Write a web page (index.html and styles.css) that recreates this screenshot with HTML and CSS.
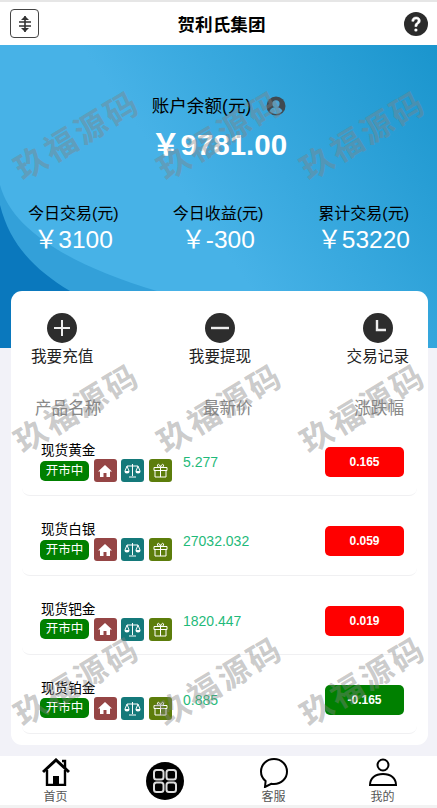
FILE: index.html
```html
<!DOCTYPE html>
<html lang="zh-CN">
<head>
    <meta charset="UTF-8">
    <meta name="viewport" content="width=device-width, initial-scale=1.0">
    <title>贺利氏集团</title>
    <link rel="stylesheet" href="styles.css">
</head>
<body>
    <div class="page">
        <header class="topbar">
            <div class="menu-btn">
                <svg width="18" height="18" viewBox="0 0 18 18"><path d="M9 1v16M3 7h12M3 11h12" stroke="#333" stroke-width="1.6" fill="none"/><path d="M9 1l4 4H5zM9 17l-4-4h8z" fill="#333"/></svg>
            </div>
            <h1 class="title">贺利氏集团</h1>
            <svg class="help" width="24" height="24" viewBox="0 0 24 24"><circle cx="12" cy="12" r="12" fill="#2b2b2b"/><path d="M7.8 9.2c0-2.6 1.9-4.2 4.3-4.2s4.2 1.5 4.2 3.7c0 3.2-3.4 3.1-3.4 5.8h-2c-.2-3.7 3.1-3.8 3.1-5.7 0-1-.8-1.7-1.9-1.7-1.2 0-2 .8-2.1 2.1z" fill="#fff" stroke="#fff" stroke-width=".6"/><circle cx="11.9" cy="18" r="1.6" fill="#fff"/></svg>
        </header>

        <section class="hero">
            <svg class="hero-curve" width="437" height="303" viewBox="0 0 437 303"><path d="M0 140C12 185 70 220 157 246V303H0z" fill="#33a0d9"/><path d="M0 160C10 200 35 225 70 246L100 303H0z" fill="#0a78bd"/></svg>
            <div class="balance">
                <div class="balance-label">账户余额(元)
                    <svg width="20" height="20" viewBox="0 0 20 20"><circle cx="10" cy="10" r="9.5" fill="#3f4a52"/><circle cx="10" cy="7.8" r="3.6" fill="#4ba6d4"/><path d="M3.6 15c1.4-3 3.8-4 6.4-4s5 1 6.4 4c-1.6 2-3.8 3-6.4 3s-4.8-1-6.4-3z" fill="#4ba6d4"/></svg>
                </div>
                <div class="balance-num">￥9781.00</div>
            </div>
            <div class="stats">
                <div class="stat"><div class="stat-label">今日交易(元)</div><div class="stat-num">￥3100</div></div>
                <div class="stat"><div class="stat-label">今日收益(元)</div><div class="stat-num">￥-300</div></div>
                <div class="stat"><div class="stat-label">累计交易(元)</div><div class="stat-num">￥53220</div></div>
            </div>
        </section>

        <main class="card">
            <div class="actions">
                <div class="action">
                    <svg width="30" height="30" viewBox="0 0 30 30"><circle cx="15" cy="15" r="15" fill="#2d2d2d"/><path d="M15 7v16M7 15h16" stroke="#eee" stroke-width="2" fill="none"/></svg>
                    <span>我要充值</span>
                </div>
                <div class="action">
                    <svg width="30" height="30" viewBox="0 0 30 30"><circle cx="15" cy="15" r="15" fill="#2d2d2d"/><path d="M6 15h18" stroke="#eee" stroke-width="2.4" fill="none"/></svg>
                    <span>我要提现</span>
                </div>
                <div class="action">
                    <svg width="30" height="30" viewBox="0 0 30 30"><circle cx="15" cy="15" r="15" fill="#2d2d2d"/><path d="M14 7v10h9" stroke="#eee" stroke-width="2.4" fill="none"/></svg>
                    <span>交易记录</span>
                </div>
            </div>

            <div class="table-head">
                <span>产品名称</span>
                <span>最新价</span>
                <span>涨跌幅</span>
            </div>

            <div class="row">
                <div class="product">
                    <div class="product-name">现货黄金</div>
                    <div class="tags">
                        <span class="open-tag">开市中</span>
                        <span class="tag tag-home"><svg width="14" height="14" viewBox="0 0 14 14"><path d="M7 1L0 7.500h2V13h3.500V9h3v4H12V7.500h2z" fill="#fff"/></svg></span>
                        <span class="tag tag-scale"><svg width="17" height="15" viewBox="0 0 17 15"><path d="M8.500 1v12M5 14h7M3 3h11M3 3L1 8M3 3l2 5M14 3l-2 5M14 3l2 5" stroke="#fff" fill="none"/><path d="M.5 8h5a2.500 2.500 0 0 1-5 0zM11.500 8h5a2.500 2.500 0 0 1-5 0z" fill="#fff"/></svg></span>
                        <span class="tag tag-gift"><svg width="15" height="15" viewBox="0 0 15 15"><path d="M1 4.500h13v3H1zM2 7.500h11V14H2zM7.500 4.500V14M7.500 4.500C5 4.500 4 3.500 4.500 2s2.500-.5 3 2.500c.5-3 2.500-4 3-2.500s-.5 2.500-3 2.500" stroke="#fff" fill="none"/></svg></span>
                    </div>
                </div>
                <div class="price">5.277</div>
                <div class="change up">0.165</div>
            </div>

            <div class="row">
                <div class="product">
                    <div class="product-name">现货白银</div>
                    <div class="tags">
                        <span class="open-tag">开市中</span>
                        <span class="tag tag-home"><svg width="14" height="14" viewBox="0 0 14 14"><path d="M7 1L0 7.500h2V13h3.500V9h3v4H12V7.500h2z" fill="#fff"/></svg></span>
                        <span class="tag tag-scale"><svg width="17" height="15" viewBox="0 0 17 15"><path d="M8.500 1v12M5 14h7M3 3h11M3 3L1 8M3 3l2 5M14 3l-2 5M14 3l2 5" stroke="#fff" fill="none"/><path d="M.5 8h5a2.500 2.500 0 0 1-5 0zM11.500 8h5a2.500 2.500 0 0 1-5 0z" fill="#fff"/></svg></span>
                        <span class="tag tag-gift"><svg width="15" height="15" viewBox="0 0 15 15"><path d="M1 4.500h13v3H1zM2 7.500h11V14H2zM7.500 4.500V14M7.500 4.500C5 4.500 4 3.500 4.500 2s2.500-.5 3 2.500c.5-3 2.500-4 3-2.500s-.5 2.500-3 2.500" stroke="#fff" fill="none"/></svg></span>
                    </div>
                </div>
                <div class="price">27032.032</div>
                <div class="change up">0.059</div>
            </div>

            <div class="row">
                <div class="product">
                    <div class="product-name">现货钯金</div>
                    <div class="tags">
                        <span class="open-tag">开市中</span>
                        <span class="tag tag-home"><svg width="14" height="14" viewBox="0 0 14 14"><path d="M7 1L0 7.500h2V13h3.500V9h3v4H12V7.500h2z" fill="#fff"/></svg></span>
                        <span class="tag tag-scale"><svg width="17" height="15" viewBox="0 0 17 15"><path d="M8.500 1v12M5 14h7M3 3h11M3 3L1 8M3 3l2 5M14 3l-2 5M14 3l2 5" stroke="#fff" fill="none"/><path d="M.5 8h5a2.500 2.500 0 0 1-5 0zM11.500 8h5a2.500 2.500 0 0 1-5 0z" fill="#fff"/></svg></span>
                        <span class="tag tag-gift"><svg width="15" height="15" viewBox="0 0 15 15"><path d="M1 4.500h13v3H1zM2 7.500h11V14H2zM7.500 4.500V14M7.500 4.500C5 4.500 4 3.500 4.500 2s2.500-.5 3 2.500c.5-3 2.500-4 3-2.500s-.5 2.500-3 2.500" stroke="#fff" fill="none"/></svg></span>
                    </div>
                </div>
                <div class="price">1820.447</div>
                <div class="change up">0.019</div>
            </div>

            <div class="row">
                <div class="product">
                    <div class="product-name">现货铂金</div>
                    <div class="tags">
                        <span class="open-tag">开市中</span>
                        <span class="tag tag-home"><svg width="14" height="14" viewBox="0 0 14 14"><path d="M7 1L0 7.500h2V13h3.500V9h3v4H12V7.500h2z" fill="#fff"/></svg></span>
                        <span class="tag tag-scale"><svg width="17" height="15" viewBox="0 0 17 15"><path d="M8.500 1v12M5 14h7M3 3h11M3 3L1 8M3 3l2 5M14 3l-2 5M14 3l2 5" stroke="#fff" fill="none"/><path d="M.5 8h5a2.500 2.500 0 0 1-5 0zM11.500 8h5a2.500 2.500 0 0 1-5 0z" fill="#fff"/></svg></span>
                        <span class="tag tag-gift"><svg width="15" height="15" viewBox="0 0 15 15"><path d="M1 4.500h13v3H1zM2 7.500h11V14H2zM7.500 4.500V14M7.500 4.500C5 4.500 4 3.500 4.500 2s2.500-.5 3 2.500c.5-3 2.500-4 3-2.500s-.5 2.500-3 2.500" stroke="#fff" fill="none"/></svg></span>
                    </div>
                </div>
                <div class="price">0.885</div>
                <div class="change down">-0.165</div>
            </div>
        </main>

        <nav class="tabbar">
            <div class="tab">
                <svg width="28" height="28" viewBox="0 0 28 28"><path d="M1 14L14 2l13 12" stroke="#000" stroke-width="3" fill="none"/><path d="M20 3h3v7" stroke="#000" stroke-width="2.400" fill="none"/><path d="M5 12v15h18V12" stroke="#000" stroke-width="2.400" fill="none"/><path d="M11 18h6v9h-6z" fill="#000"/></svg>
                <span>首页</span>
            </div>
            <div class="tab">
                <div class="tab-center">
                    <svg width="24" height="24" viewBox="0 0 24 24"><g stroke="#ddd" stroke-width="2" fill="none"><rect x="1" y="1" width="9.500" height="9.500" rx="2.500"/><rect x="13.500" y="1" width="9.500" height="9.500" rx="2.500"/><rect x="1" y="13.500" width="9.500" height="9.500" rx="2.500"/><rect x="13.500" y="13.500" width="9.500" height="9.500" rx="2.500"/></g></svg>
                </div>
            </div>
            <div class="tab">
                <svg width="28" height="30" viewBox="0 0 28 30"><path d="M14 1C6.500 1 1 6.600 1 13.500c0 3.900 1.800 7.300 4.600 9.600L5 29l6.200-3.200c.9.200 1.800.2 2.800.2 7.500 0 13-5.600 13-12.500S21.500 1 14 1z" stroke="#000" stroke-width="2" fill="none"/></svg>
                <span class="tab-label-chat">客服</span>
            </div>
            <div class="tab">
                <svg width="28" height="28" viewBox="0 0 28 28"><circle cx="14" cy="7" r="5.500" stroke="#000" stroke-width="2" fill="none"/><path d="M1 27c0-6.500 5-11 13-11s13 4.500 13 11z" stroke="#000" stroke-width="2" fill="none"/></svg>
                <span>我的</span>
            </div>
        </nav>

        <div class="watermarks">
            <span>玖福源码</span><span>玖福源码</span><span>玖福源码</span>
            <span>玖福源码</span><span>玖福源码</span><span>玖福源码</span>
            <span>玖福源码</span><span>玖福源码</span><span>玖福源码</span>
        </div>
    </div>
</body>
</html>
```

FILE: styles.css
```css
* {
    box-sizing: border-box;
}
html, body {
    margin: 0;
    padding: 0;
}
body {
    font-family: "Liberation Sans", "Noto Sans CJK SC", sans-serif;
    background-color: #f2f2f8;
    color: #000;
}
.page {
    position: relative;
    width: 437px;
    height: 808px;
    overflow: hidden;
    display: flex;
    flex-direction: column;
    border-top: 2px solid #e6e6e6;
    border-bottom: 3px solid #f2f2f2;
}
.topbar {
    height: 43px;
    flex: none;
    background-color: #fff;
    display: flex;
    align-items: center;
    justify-content: space-between;
    padding: 0 9px 0 10px;
}
.menu-btn {
    width: 29px;
    height: 29px;
    border: 1px solid #444;
    border-radius: 4px;
    display: flex;
    align-items: center;
    justify-content: center;
}
.title {
    margin: 0;
    font-size: 17.6px;
    font-weight: bold;
}
.help {
    display: block;
}
.hero {
    position: relative;
    height: 303px;
    flex: none;
    background: linear-gradient(55deg, #47b2e7 45%, #1a95cd 100%);
    padding-top: 49px;
    color: #fff;
}
.hero-curve {
    position: absolute;
    left: 0;
    top: 0;
}
.balance, .stats {
    position: relative;
}
.balance {
    text-align: center;
}
.balance-label {
    color: #000;
    font-size: 17.6px;
    line-height: 24px;
    display: flex;
    justify-content: center;
    align-items: center;
    gap: 15px;
    padding-left: 1px;
}
.balance-num {
    font-size: 29.5px;
    font-weight: bold;
    line-height: 36px;
    margin-top: 9px;
    padding-left: 1px;
}
.stats {
    display: flex;
    justify-content: space-between;
    padding: 0 27px 0 28px;
    margin-top: 40px;
}
.stat {
    text-align: center;
}
.stat-label {
    color: #000;
    font-size: 16px;
    line-height: 22px;
}
.stat-num {
    font-size: 24.5px;
    line-height: 30px;
}
.card {
    margin: -57px 9px 0 11px;
    height: 454px;
    flex: none;
    position: relative;
    background-color: #fff;
    border-radius: 11px;
    padding: 22px 11px 0;
}
.actions {
    display: flex;
    justify-content: space-between;
    padding: 0 8px 0 9px;
    height: 75px;
}
.action {
    display: flex;
    flex-direction: column;
    align-items: center;
    gap: 2px;
    font-size: 15.6px;
    line-height: 24px;
    color: #222;
}
.table-head {
    display: flex;
    justify-content: space-between;
    padding: 9px 13px 0;
    font-size: 16.6px;
    line-height: 24px;
    height: 29px;
    color: #888;
}
.row {
    height: 79.3px;
    display: flex;
    align-items: flex-start;
    border-bottom: 1px solid #f0f0f2;
    border-radius: 0 0 8px 8px;
    padding-top: 27px;
    position: relative;
}
.product {
    width: 161px;
    flex: none;
}
.product-name {
    font-size: 13.6px;
    line-height: 18px;
    padding-left: 19px;
    margin-top: -2px;
    color: #000;
}
.tags {
    display: flex;
    align-items: center;
    gap: 4.5px;
    margin-top: -1px;
}
.open-tag {
    width: 49px;
    height: 20px;
    margin-left: 18px;
    background-color: #008000;
    color: #fff;
    font-size: 12.500px;
    line-height: 20px;
    text-align: center;
    border-radius: 5px;
}
.tag {
    width: 23px;
    height: 23px;
    border-radius: 3px;
    display: flex;
    align-items: center;
    justify-content: center;
}
.tag-home {
    background-color: #954545;
}
.tag-scale {
    background-color: #14797a;
}
.tag-gift {
    background-color: #5c7d0b;
}
.price {
    width: 142px;
    flex: none;
    font-size: 14px;
    line-height: 20px;
    padding-top: 8px;
    color: #1fba7a;
}
.change {
    width: 79px;
    height: 30px;
    margin-top: 3px;
    border-radius: 5px;
    color: #fff;
    font-size: 12px;
    font-weight: bold;
    line-height: 30px;
    text-align: center;
}
.up {
    background-color: #f00;
}
.down {
    background-color: #008000;
}
.tabbar {
    margin-top: 11px;
    height: 49px;
    flex: none;
    position: relative;
    background-color: #fff;
    display: grid;
    grid-template-columns: repeat(4, 1fr);
    padding-left: 1px;
}
.tab {
    display: flex;
    flex-direction: column;
    align-items: center;
    font-size: 12px;
    line-height: 16px;
    color: #555;
    padding-top: 2px;
}
.tab span {
    margin-top: 3px;
}
.tab .tab-label-chat {
    margin-top: 1px;
}
.tab-center {
    width: 38px;
    height: 38px;
    margin-top: 4px;
    border-radius: 50%;
    background-color: #000;
    display: flex;
    align-items: center;
    justify-content: center;
}
/* watermark sits on top of everything */
.watermarks {
    position: absolute;
    left: 7px;
    top: 48px;
    width: 430px;
    display: grid;
    grid-template-columns: repeat(3, 143px);
    grid-auto-rows: 273px;
    pointer-events: none;
}
.watermarks span {
    display: block;
    font-size: 32px;
    font-weight: bold;
    letter-spacing: 3px;
    white-space: nowrap;
    color: rgba(130, 130, 130, 0.42);
    transform: rotate(-31deg);
    width: 143px;
    height: 170px;
    line-height: 170px;
}
```
